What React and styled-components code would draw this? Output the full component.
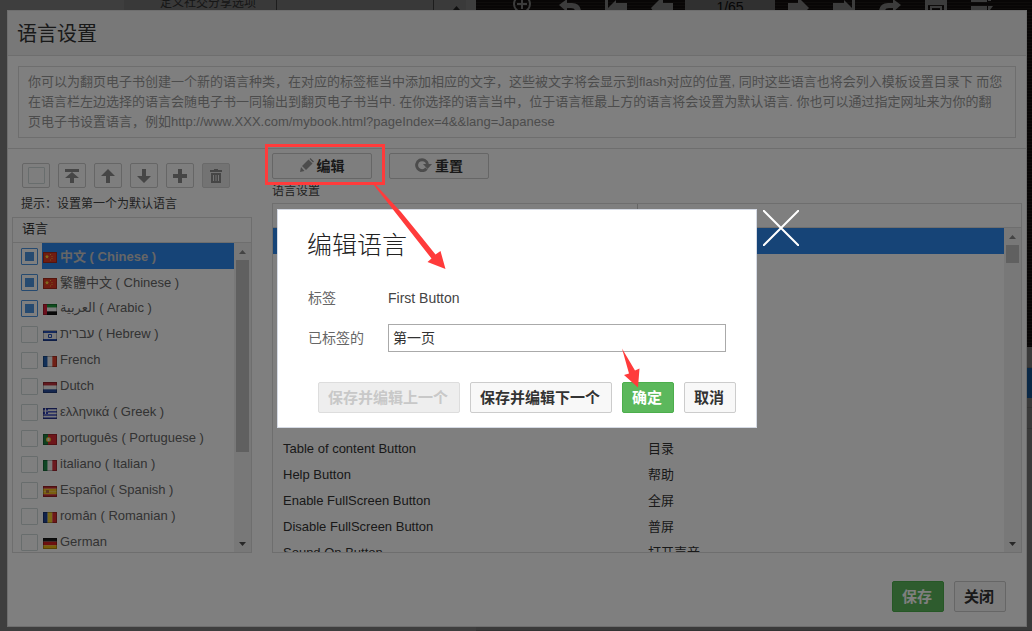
import React, { useState } from 'react';
import styled, { createGlobalStyle } from 'styled-components';

const GlobalStyle = createGlobalStyle`
  * {
    box-sizing: border-box;
  }

  html,
  body,
  #root {
    height: 100%;
  }

  body {
    margin: 0;
    overflow: hidden;
    color: #333;
    background: #7c7c7c;
    font-family: 'Liberation Sans', 'Noto Sans CJK SC', 'DejaVu Sans', sans-serif;
    font-size: 13px;
  }

  button,
  input {
    font-family: inherit;
  }
`;

/* page behind the dialogs */

const Page = styled.div`
  display: flex;
  height: 100%;
`;

const OptionPane = styled.div`
  display: flex;
  width: 476px;
  flex-shrink: 0;
  height: 10px;
  overflow: hidden;
`;

const OptionSpacer = styled.div`
  width: 124px;
`;

const OptionName = styled.div`
  width: 153px;
  padding-left: 36px;
  background: #727272;
  border-right: 1px solid #3a3a3a;
  color: #2c2c2c;
  font-size: 12px;
  line-height: 6px;
`;

const OptionValue = styled.div`
  width: 157px;
  background: #727272;
  border-right: 1px solid #3a3a3a;
`;

const OptionScroll = styled.div`
  display: flex;
  align-items: flex-end;
  justify-content: center;
  width: 32px;
  padding-left: 12px;
  background: #747474;
`;

const BookPane = styled.div`
  display: flex;
  flex: 1;
  flex-direction: column;
`;

const BookToolbar = styled.div`
  display: flex;
  flex-shrink: 0;
  gap: 24px;
  height: 10px;
  padding-left: 37px;
  overflow: hidden;
  background: repeating-linear-gradient(#100d0c 0 2px, #1c1816 2px 3px);

  & svg {
    flex-shrink: 0;
    fill: #787878;
  }
`;

const PageNumber = styled.div`
  width: 90px;
  height: 10px;
  margin: 0 -12px;
  flex-shrink: 0;
  background: #606060;
  color: #0c0c0c;
  font-size: 14px;
  line-height: 14px;
  text-align: center;
`;

const BookSide = styled.div`
  display: flex;
  flex-direction: column;
`;

const BookCover = styled.div`
  height: 337px;
  background: repeating-linear-gradient(#100d0c 0 2px, #1c1816 2px 3px);
`;

const SideGrey = styled.div`
  height: ${props => props.size}px;
  background: #747474;
  border-bottom: 1px solid #666;
`;

const SideBlue = styled.div`
  height: 30px;
  background: #14508c;
`;

/* dialogs */

const SettingsLayer = styled.div`
  position: fixed;
  inset: 0;
  display: flex;
  padding: 10px 5px 4px 7px;
`;

const SettingsDialog = styled.section`
  display: flex;
  flex: 1;
  flex-direction: column;
  min-width: 0;
  background: #fff;
  border: 1px solid #ddd;
`;

const SettingsTitle = styled.h1`
  height: 45px;
  margin: 0;
  padding: 0 9px;
  flex-shrink: 0;
  background: #f0f0f0;
  border-bottom: 1px solid #ddd;
  font-size: 20px;
  font-weight: 400;
  line-height: 46px;
`;

const Description = styled.p`
  margin: 10px;
  padding: 5px 12px 5px 9px;
  border: 1px solid #ddd;
  color: #999;
  font-size: 13px;
  line-height: 20px;
`;

const Columns = styled.div`
  display: flex;
  flex: 1;
  gap: 20px;
  min-height: 0;
  padding: 0 4px;
  border-top: 1px solid #ddd;
`;

const LanguageColumn = styled.div`
  display: flex;
  flex-direction: column;
  width: 240px;
  flex-shrink: 0;
  padding-top: 14px;
`;

const LabelColumn = styled.div`
  display: flex;
  flex: 1;
  flex-direction: column;
  min-width: 0;
  padding-top: 4px;
`;

const IconBar = styled.div`
  display: flex;
  gap: 8px;
  padding-left: 10px;
`;

const IconButton = styled.button`
  display: flex;
  align-items: center;
  justify-content: center;
  width: 28px;
  height: 25px;
  padding: 0;
  background: ${props => (props.disabled ? '#e6e6e6' : '#fdfdfd')};
  border: 1px solid ${props => (props.disabled ? '#d4d4d4' : '#ccc')};
  border-radius: 2px;

  & svg {
    fill: #8c8c8c;
  }
`;

const CheckFrame = styled(IconButton).attrs({ as: 'label' })``;

const Hint = styled.div`
  color: #444;
  font-size: 12px;
  line-height: 24px;
  ${props => props.indented && 'padding: 4px 0 1px 9px;'}
`;

const Panel = styled.div`
  display: flex;
  flex: 1;
  flex-direction: column;
  min-height: 0;
  border: 1px solid #ddd;
`;

const PanelTitle = styled.div`
  height: 25px;
  padding-left: 9px;
  border-bottom: 1px solid #ddd;
  line-height: 22px;
`;

const PanelBody = styled.div`
  display: flex;
  flex: 1;
  min-height: 0;
`;

const LanguageList = styled.ul`
  flex: 1;
  margin: 0;
  padding: 0 0 0 8px;
  overflow: hidden;
  list-style: none;
`;

const LanguageItem = styled.li`
  display: flex;
  align-items: center;
  gap: 4px;
  height: 26px;
`;

const Checkbox = styled.input.attrs({ type: 'checkbox' })`
  appearance: none;
  width: 17px;
  height: 17px;
  margin: 0;
  padding: 3px;
  flex-shrink: 0;
  background: ${props => (props.checked ? '#4c94e0' : 'transparent')} content-box;
  border: 1px solid ${props => (props.checked ? '#4c94e0' : '#d0dada')};
  border-radius: 1px;
`;

const LanguageName = styled.label`
  display: flex;
  align-items: center;
  gap: 3px;
  flex: 1;
  height: 26px;
  padding: 0 0 2px 1px;
  color: #666;
  white-space: nowrap;
  ${props =>
    props.selected &&
    `
    background: #2d89ef;
    color: #ccc;
    font-weight: 700;
  `}

  & svg {
    margin-top: 4px;
    flex-shrink: 0;
  }
`;

const ScrollTrack = styled.div`
  display: flex;
  flex-direction: column;
  align-items: center;
  width: 17px;
  flex-shrink: 0;
  background: #f0f0f0;
`;

const ScrollThumb = styled.div`
  width: 13px;
  height: ${props => props.size}px;
  background: #c0c0c0;
`;

const ScrollArrow = styled.span`
  display: flex;
  align-items: center;
  justify-content: center;
  height: 17px;
  ${props => props.down && 'margin-top: auto;'}
`;

const ActionBar = styled.div`
  display: flex;
  gap: 17px;
`;

const ActionButton = styled.button`
  display: flex;
  align-items: center;
  justify-content: center;
  gap: 3px;
  width: 100px;
  height: 26px;
  padding: 0 0 2px;
  background: #fdfdfd;
  border: 1px solid #ccc;
  border-radius: 2px;
  color: #333;
  font-size: 14px;
  font-weight: 700;

  & svg {
    fill: #999;
  }
`;

const LabelHead = styled.div`
  display: flex;
  height: 24px;
  border-bottom: 1px solid #ddd;
`;

const TableWrap = styled.div`
  flex: 1;
  overflow: hidden;
`;

const Table = styled.table`
  width: 100%;
  table-layout: fixed;
  border-collapse: collapse;
`;

const HeadCell = styled.div`
  width: 365px;
  height: 23px;
  border-right: 1px solid #ccc;
`;

const Cell = styled.td`
  width: ${props => props.size};
  height: 26px;
  padding: 0 10px;
  line-height: 16px;
`;

const Row = styled.tr`
  ${props =>
    props.selected &&
    `
    background: #2d89ef;
    color: #fff;
  `}
`;

const Footer = styled.footer`
  display: flex;
  gap: 10px;
  justify-content: flex-end;
  flex-shrink: 0;
  padding: ${props => (props.compact ? '0 20px 14px' : '28px 20px 14px')};
`;

const Button = styled.button`
  position: relative;
  height: 31px;
  padding: 0 11px 2px 9px;
  background: #f8f8f8;
  border: 1px solid #ccc;
  border-radius: 2px;
  color: #333;
  font-size: 15px;
  font-weight: 700;
  white-space: nowrap;
  ${props =>
    props.primary &&
    `
    background: #5cb85c;
    border-color: #4cae4c;
    color: #fff;
  `}

  &:disabled {
    background: #eee;
    border-color: #ddd;
    color: #c8c8c8;
  }
`;

const EditLayer = styled.div`
  position: fixed;
  inset: 0;
  display: flex;
  align-items: center;
  justify-content: center;
  padding: 6px 0 0 2px;
  background: rgba(0, 0, 0, 0.5);
`;

const EditDialog = styled.section`
  position: relative;
  display: flex;
  flex-direction: column;
  width: 480px;
  background: #fff;
  border: 1px solid #d5dae4;
`;

const EditTitle = styled.h2`
  margin: 0;
  padding: 0 29px;
  color: #222;
  font-size: 25px;
  font-weight: 300;
  line-height: 70px;
`;

const Fields = styled.div`
  display: grid;
  grid-template-columns: 80px 1fr;
  row-gap: 12px;
  align-items: center;
  padding: 4px 30px 30px;
  color: #666;
  font-size: 14px;
  line-height: 28px;
`;

const FieldValue = styled.span`
  color: #444;
`;

const TextInput = styled.input`
  width: 100%;
  height: 28px;
  padding: 0 4px 2px;
  border: 1px solid #aaa;
  color: #333;
  font-size: 14px;
`;

const CloseButton = styled.button`
  position: absolute;
  top: 0;
  left: 485px;
  width: 36px;
  height: 36px;
  padding: 0;
  background: none;
  border: 0;
`;

/* red marks drawn over the dialogs */

const EditMark = styled.div`
  position: absolute;
  top: 144px;
  left: 265px;
  width: 120px;
  height: 41px;
  border: 3px solid #ff3b3b;

  & svg {
    position: absolute;
    top: 37px;
    left: 104px;
  }
`;

const ConfirmMark = styled.svg`
  position: absolute;
  top: -36px;
  left: -2px;
  pointer-events: none;
`;

const languages = [
  { id: 'zh', name: '中文 ( Chinese )', flag: 'cn', checked: true },
  { id: 'zht', name: '繁體中文 ( Chinese )', flag: 'cn', checked: true },
  { id: 'ar', name: 'العربية ( Arabic )', flag: 'ae', checked: true },
  { id: 'he', name: 'עברית ( Hebrew )', flag: 'il' },
  { id: 'fr', name: 'French', flag: 'fr' },
  { id: 'nl', name: 'Dutch', flag: 'nl' },
  { id: 'el', name: 'ελληνικά ( Greek )', flag: 'gr' },
  { id: 'pt', name: 'português ( Portuguese )', flag: 'pt' },
  { id: 'it', name: 'italiano ( Italian )', flag: 'it' },
  { id: 'es', name: 'Español ( Spanish )', flag: 'es' },
  { id: 'ro', name: 'român ( Romanian )', flag: 'ro' },
  { id: 'de', name: 'German', flag: 'de' },
];

const labels = [
  ...Array(8).fill(['', '']),
  ['Table of content Button', '目录'],
  ['Help Button', '帮助'],
  ['Enable FullScreen Button', '全屏'],
  ['Disable FullScreen Button', '普屏'],
  ['Sound On Button', '打开声音'],
];

const columns = colors =>
  colors.map((color, i) => (
    <rect key={i} x={(i * 14) / colors.length} width={14 / colors.length} height="11" fill={color} />
  ));

const stripes = colors =>
  colors.map((color, i) => (
    <rect key={i} y={(i * 11) / colors.length} width="14" height={11 / colors.length} fill={color} />
  ));

const flags = {
  cn: (
    <>
      <rect width="14" height="11" fill="#e03a24" />
      <path d="M4 2.5l.6 1.3 1.4.1-1 1 .3 1.5L4 5.7l-1.3.7.3-1.5-1-1 1.4-.1z" fill="#ffd83a" />
      <path d="M7 2h1v1H7zM8.500 4h1v1h-1zM8.500 6h1v1h-1zM7 7.500h1v1H7z" fill="#f5b030" />
    </>
  ),
  ae: (
    <>
      {stripes(['#1f9a3c', '#f4f4f4', '#111'])}
      <rect width="4" height="11" fill="#d8203a" />
    </>
  ),
  il: (
    <>
      <rect width="14" height="11" fill="#f4f4f4" />
      <path d="M0 1h14v2H0zM0 9h14v2H0z" fill="#2a52b8" />
      <path d="M5.500 4.500h3v3h-3z" fill="none" stroke="#2a52b8" />
    </>
  ),
  fr: columns(['#2460b0', '#f4f4f4', '#e0402c']),
  nl: stripes(['#c0303c', '#f4f4f4', '#284c9c']),
  gr: (
    <>
      {stripes(['#3040b8', '#f0f0f0', '#3040b8', '#f0f0f0', '#3040b8', '#f0f0f0', '#3040b8'])}
      <rect width="5" height="6" fill="#3040b8" />
      <path d="M2 0h1v6H2zM0 2.500h5v1H0z" fill="#f0f0f0" />
    </>
  ),
  pt: (
    <>
      <rect width="14" height="11" fill="#dc2c34" />
      <rect width="5" height="11" fill="#208040" />
      <circle cx="5.500" cy="5.500" r="2.500" fill="#f0c030" />
      <rect x="4.500" y="4" width="2" height="3" fill="#f4e4e4" />
    </>
  ),
  it: columns(['#1c8c48', '#f4f4f4', '#d83440']),
  es: (
    <>
      {stripes(['#c82c30', '#f4c020', '#f4c020', '#c82c30'])}
      <rect x="3" y="4" width="3" height="3" fill="#b87040" />
    </>
  ),
  ro: columns(['#204494', '#f4d030', '#dc3030']),
  de: stripes(['#1c1c1c', '#d82020', '#f0b810']),
};

const Flag = ({ code }) => (
  <svg width="14" height="11" viewBox="0 0 14 11" aria-hidden="true">
    {flags[code]}
    <rect x=".5" y=".5" width="13" height="10" fill="none" stroke="#000" strokeOpacity=".25" />
  </svg>
);

const Triangle = ({ down, color }) => (
  <svg width="7" height="4" viewBox="0 0 7 4" aria-hidden="true">
    <path d={down ? 'M0 0h7L3.500 4z' : 'M0 4h7L3.500 0z'} fill={color} />
  </svg>
);

const ToolIcon = ({ path }) => (
  <svg width="14" height="14" viewBox="0 0 14 14" aria-hidden="true">
    <path d={path} fillRule="evenodd" />
  </svg>
);

const BookIcon = ({ path }) => (
  <svg width="22" height="10" viewBox="0 0 22 10" aria-hidden="true">
    <path d={path} fillRule="evenodd" />
  </svg>
);

const Scrollbar = ({ size }) => (
  <ScrollTrack>
    <ScrollArrow>
      <Triangle color="#888" />
    </ScrollArrow>
    <ScrollThumb size={size} />
    <ScrollArrow down>
      <Triangle down color="#505050" />
    </ScrollArrow>
  </ScrollTrack>
);

const tools = [
  { title: '置顶', path: 'M0 0h14v3H0zM7 3l7 6H9v5H5V9H0z' },
  { title: '上移', path: 'M7 0l7 7H9v7H5V7H0z' },
  { title: '下移', path: 'M7 14l7-7H9V0H5v7H0z' },
  { title: '添加', path: 'M5 0h4v5h5v4H9v5H5V9H0V5h5z' },
];

const Background = () => (
  <Page>
    <OptionPane>
      <OptionSpacer />
      <OptionName>定义社交分享选项</OptionName>
      <OptionValue />
      <OptionScroll>
        <Triangle color="#202020" />
      </OptionScroll>
    </OptionPane>
    <BookPane>
      <BookToolbar>
        <BookIcon path="M0 4a9 9 0 0 1 18 0a9 9 0 0 1-18 0zM2 4a7 7 0 0 0 14 0a7 7 0 0 0-14 0zM8 0h2v3h4v2h-4v4H8V5H4V3h4z" />
        <BookIcon path="M0 5l8-6v4h5q8 0 9 8h-6q0-3-4-3H8v4z" />
        <BookIcon path="M0 0h3v8l8-8v3h11v8H0z" />
        <BookIcon path="M0 8l9-9h3v4h10v8H2z" />
        <PageNumber>1/65</PageNumber>
        <BookIcon path="M22 8l-9-9h-2v4H1v8h18z" />
        <BookIcon path="M22 0h-3v8l-8-8v3H0v8h22z" />
        <BookIcon path="M22 5l-8-6v4H9q-8 0-9 8h6q0-3 4-3h4v4z" />
        <BookIcon path="M0 0h22v10h-3V5H3v5H0zM5 6h12v4H5zM7 8v2h8V8z" />
        <BookIcon path="M0 0h16v2H0zM0 6h16v4H0zM17 0h3v1h-3zM17 6h5l-3 4h-2z" />
      </BookToolbar>
      <BookSide>
        <BookCover />
        <SideGrey size={21} />
        <SideBlue />
        <SideGrey size={10} />
        <SideGrey size={21} />
        <SideGrey size={202} />
      </BookSide>
    </BookPane>
  </Page>
);

const App = () => {
  const [value, setValue] = useState('第一页');
  const [checked, setChecked] = useState(languages.filter(l => l.checked).map(l => l.id));

  const toggle = id =>
    setChecked(checked.includes(id) ? checked.filter(c => c !== id) : [...checked, id]);

  return (
    <>
      <GlobalStyle />
      <Background />
      <SettingsLayer>
        <SettingsDialog>
          <SettingsTitle>语言设置</SettingsTitle>
          <Description>
            你可以为翻页电子书创建一个新的语言种类，在对应的标签框当中添加相应的文字，这些被文字将会显示到flash对应的位置,
            同时这些语言也将会列入模板设置目录下
            而您在语言栏左边选择的语言会随电子书一同输出到翻页电子书当中.
            在你选择的语言当中，位于语言框最上方的语言将会设置为默认语言.
            你也可以通过指定网址来为你的翻页电子书设置语言，例如http://www.XXX.com/mybook.html?pageIndex=4&&lang=Japanese
          </Description>
          <Columns>
            <LanguageColumn>
              <IconBar>
                <CheckFrame>
                  <Checkbox aria-label="全选" checked={false} readOnly />
                </CheckFrame>
                {tools.map(tool => (
                  <IconButton key={tool.title} aria-label={tool.title}>
                    <ToolIcon path={tool.path} />
                  </IconButton>
                ))}
                <IconButton disabled aria-label="删除">
                  <ToolIcon path="M5 0h4v1h4v2H1V1h4zM2 4h10v10H2zM4 6v6h1V6zM6.500 6v6h1V6zM9 6v6h1V6z" />
                </IconButton>
              </IconBar>
              <Hint indented>提示：设置第一个为默认语言</Hint>
              <Panel>
                <PanelTitle>语言</PanelTitle>
                <PanelBody>
                  <LanguageList>
                    {languages.map((lang, i) => (
                      <LanguageItem key={lang.id}>
                        <Checkbox
                          id={lang.id}
                          checked={checked.includes(lang.id)}
                          onChange={() => toggle(lang.id)}
                        />
                        <LanguageName htmlFor={lang.id} selected={i === 0}>
                          <Flag code={lang.flag} />
                          {lang.name}
                        </LanguageName>
                      </LanguageItem>
                    ))}
                  </LanguageList>
                  <Scrollbar size={192} />
                </PanelBody>
              </Panel>
            </LanguageColumn>
            <LabelColumn>
              <ActionBar>
                <ActionButton>
                  <ToolIcon path="M0 14l1-5 3.500 4zM2 8l6.500-6.500 4 4L6 12zM9.500 1l1-1 3.500 3.500-1 1z" />
                  编辑
                </ActionButton>
                <ActionButton>
                  <svg width="17" height="14" viewBox="0 0 17 14" aria-hidden="true">
                    <path d="M11.500 10.500A5.500 5.500 0 1 1 12.500 6" style={{ fill: 'none' }} stroke="#999" strokeWidth="3" />
                    <path d="M8 6h9l-4.500 5z" />
                  </svg>
                  重置
                </ActionButton>
              </ActionBar>
              <Hint>语言设置</Hint>
              <Panel>
                <LabelHead>
                  <HeadCell />
                </LabelHead>
                <PanelBody>
                  <TableWrap>
                    <Table>
                      <tbody>
                        {labels.map(([name, text], i) => (
                          <Row key={i} selected={i === 0}>
                            <Cell size="365px">{name}</Cell>
                            <Cell>{text}</Cell>
                          </Row>
                        ))}
                      </tbody>
                    </Table>
                  </TableWrap>
                  <Scrollbar size={18} />
                </PanelBody>
              </Panel>
            </LabelColumn>
          </Columns>
          <Footer>
            <Button primary>保存</Button>
            <Button>关闭</Button>
          </Footer>
        </SettingsDialog>
      </SettingsLayer>
      <EditLayer>
        <EditDialog role="dialog" aria-labelledby="edit-title">
          <EditTitle id="edit-title">编辑语言</EditTitle>
          <Fields>
            <span>标签</span>
            <FieldValue>First Button</FieldValue>
            <label htmlFor="translated">已标签的</label>
            <TextInput id="translated" value={value} onChange={e => setValue(e.target.value)} />
          </Fields>
          <Footer compact>
            <Button disabled>保存并编辑上一个</Button>
            <Button>保存并编辑下一个</Button>
            <Button primary>
              确定
              <ConfirmMark width="20" height="42" viewBox="0 0 20 42">
                <path d="M1 1.500l13 22 4.500-2L17 40.500 3 28l5-1.500z" fill="#ff3b3b" />
              </ConfirmMark>
            </Button>
            <Button>取消</Button>
          </Footer>
          <CloseButton aria-label="关闭">
            <svg width="36" height="36" viewBox="0 0 36 36">
              <path d="M0 0l36 36M36 0L0 36" stroke="#fff" strokeWidth="2" />
            </svg>
          </CloseButton>
        </EditDialog>
        <EditMark>
          <svg width="80" height="90" viewBox="0 0 80 90">
            <path d="M1 0h2l26 28 18 22 16.500 20.500 5-3.500 5 18-18-7 4-3.500z" fill="#ff3b3b" />
          </svg>
        </EditMark>
      </EditLayer>
    </>
  );
};

export default App;
